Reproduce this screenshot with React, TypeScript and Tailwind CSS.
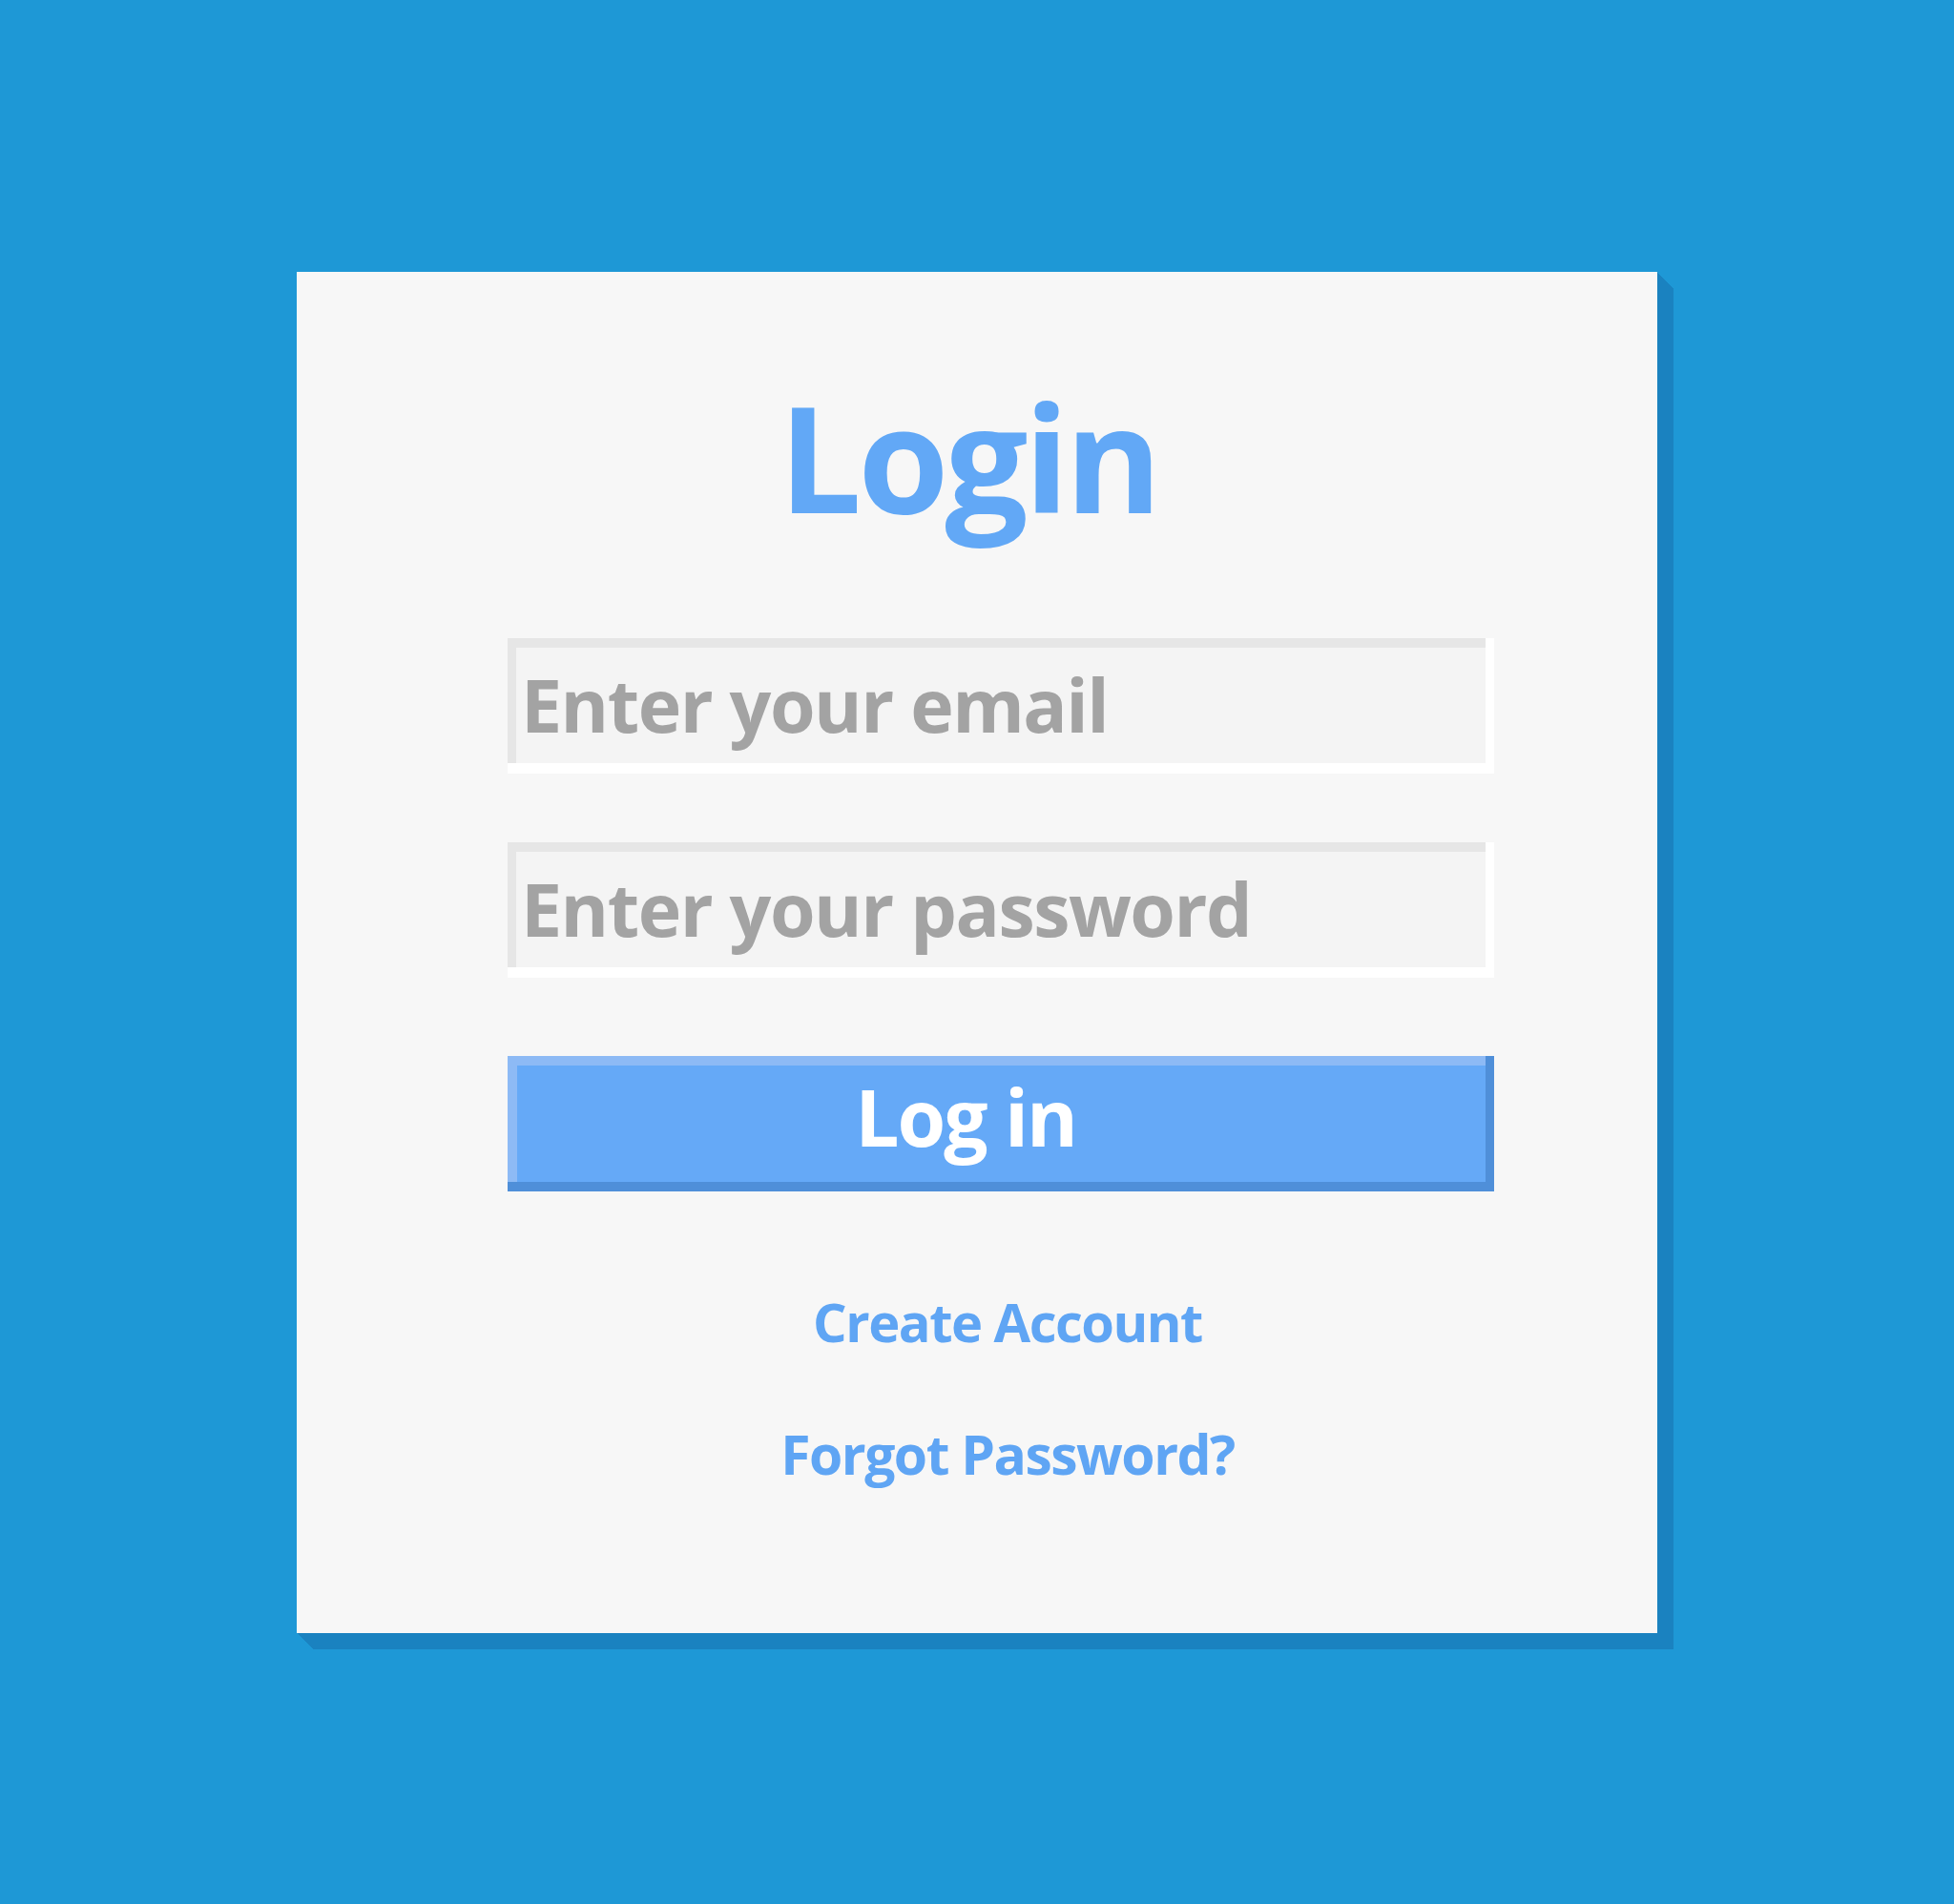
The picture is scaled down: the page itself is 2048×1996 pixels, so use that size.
import React from "react";

const font = { fontFamily: '"Open Sans", "Noto Sans", sans-serif' };

function Field({ placeholder }: { placeholder: string }) {
  return (
    <div className="h-[142px] w-[1034px] bg-[#f4f4f4] pl-[14px] pt-[31px] shadow-[inset_-9px_-11px_0_#ffffff,inset_9px_10px_0_#e6e6e6]">
      <p className="text-[77px] leading-none font-bold tracking-[-1.5px] text-[#a3a3a3]">
        {placeholder}
      </p>
    </div>
  );
}

export default function App() {
  return (
    <div
      className="min-h-[1996px] w-full bg-[#1e98d6] pl-[311px] pt-[285px]"
      style={font}
    >
      <div className="flex h-[1427px] w-[1426px] flex-col bg-[#f7f7f7] shadow-[1px_1px_0_#1a82c0,2px_2px_0_#1a82c0,3px_3px_0_#1a82c0,4px_4px_0_#1a82c0,5px_5px_0_#1a82c0,6px_6px_0_#1a82c0,7px_7px_0_#1a82c0,8px_8px_0_#1a82c0,9px_9px_0_#1a82c0,10px_10px_0_#1a82c0,11px_11px_0_#1a82c0,12px_12px_0_#1a82c0,13px_13px_0_#1a82c0,14px_14px_0_#1a82c0,15px_15px_0_#1a82c0,16px_16px_0_#1a82c0,17px_17px_0_#1a82c0]">
        <h1 className="mt-[116px] pr-[18px] text-center text-[154px] leading-none font-bold tracking-[-4px] text-[#62a8f6]">
          Login
        </h1>

        <div className="mt-[114px] ml-[221px] flex w-[1034px] flex-col">
          <Field placeholder="Enter your email" />
          <div className="mt-[72px]">
            <Field placeholder="Enter your password" />
          </div>

          <button className="mt-[82px] flex h-[142px] w-[1034px] justify-center bg-[#65a9f7] pr-[74px] pt-[22px] shadow-[inset_-9px_-10px_0_#4f8fd9,inset_10px_10px_0_#8dbaf5]">
            <span className="text-[82px] leading-none font-bold tracking-[-2px] text-white">
              Log in
            </span>
          </button>

          <div className="mt-[108px] flex flex-col items-center gap-[83px] pl-[14px] text-[#5fa5f4]">
            <a className="text-[56px] leading-none font-bold tracking-[-1.5px]">
              Create Account
            </a>
            <a className="text-[57px] leading-none font-bold tracking-[-1.5px]">
              Forgot Password?
            </a>
          </div>
        </div>
      </div>
    </div>
  );
}
